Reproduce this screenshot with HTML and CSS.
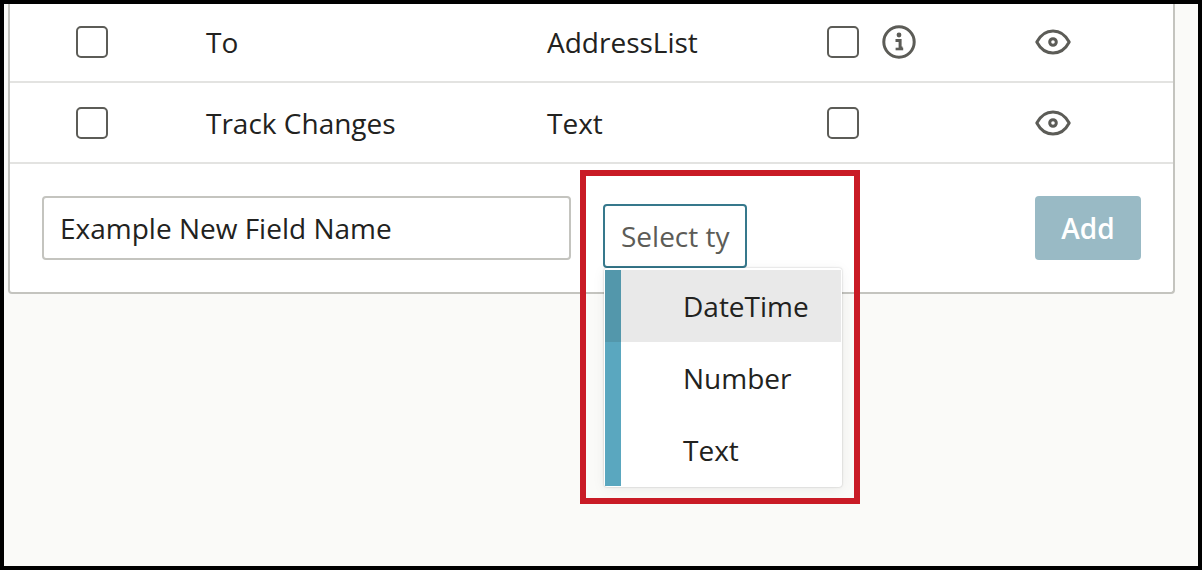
FILE: index.html
```html
<!DOCTYPE html>
<html lang="en">
<head>
<meta charset="utf-8">
<title>Fields</title>
<link rel="stylesheet" href="styles.css">
</head>
<body>
<div class="frame">
  <div class="card">
    <div class="row">
      <span class="check"></span>
      <span class="cell">To</span>
      <span class="cell">AddressList</span>
      <span class="check"></span>
      <svg class="info" viewBox="0 0 34 34"><circle cx="17" cy="17" r="15.200" fill="none" stroke="#5c5c57" stroke-width="3"/><circle cx="17" cy="10" r="2.400" fill="#5c5c57"/><path d="M13.500 15.500h4.600v7.500h2.400" fill="none" stroke="#5c5c57" stroke-width="3"/><path d="M13.600 24h7.600" fill="none" stroke="#5c5c57" stroke-width="2.600"/></svg>
      <svg class="eye" viewBox="0 0 36 26"><path d="M1.800 13C5.500 6 11 2 18 2s12.500 4 16.200 11C30.500 20 25 24 18 24S5.500 20 1.800 13Z" fill="none" stroke="#5c5c57" stroke-width="3" stroke-linejoin="round"/><circle cx="18" cy="13" r="3.300" fill="none" stroke="#5c5c57" stroke-width="3"/></svg>
    </div>
    <div class="row">
      <span class="check"></span>
      <span class="cell">Track Changes</span>
      <span class="cell">Text</span>
      <span class="check"></span>
      <span></span>
      <svg class="eye" viewBox="0 0 36 26"><path d="M1.800 13C5.500 6 11 2 18 2s12.500 4 16.200 11C30.500 20 25 24 18 24S5.500 20 1.800 13Z" fill="none" stroke="#5c5c57" stroke-width="3" stroke-linejoin="round"/><circle cx="18" cy="13" r="3.300" fill="none" stroke="#5c5c57" stroke-width="3"/></svg>
    </div>
    <div class="add-row">
      <div class="name-input">Example New Field Name</div>
      <div class="select-wrap">
        <div class="select">Select ty</div>
        <ul class="menu">
          <li class="option active">DateTime</li>
          <li class="option">Number</li>
          <li class="option">Text</li>
        </ul>
      </div>
      <button class="add-btn">Add</button>
    </div>
  </div>
  <div class="highlight"></div>
</div>
</body>
</html>
```
FILE: styles.css
```css
* { box-sizing: border-box; }
html, body { margin: 0; padding: 0; }
body { font-family: "Open Sans", sans-serif; color: #222220; }
.frame {
  position: relative;
  width: 1202px;
  height: 570px;
  border: 4px solid #000;
  background: #fafaf8;
  overflow: hidden;
}
.card {
  width: 1167px;
  margin: -2px 0 0 4px;
  background: #fff;
  border: 2px solid #c4c4bf;
  border-top: 0;
  border-radius: 0 0 4px 4px;
}
.row {
  display: grid;
  grid-template-columns: 130px 341px 280px 55px 153px 36px;
  align-items: center;
  height: 81px;
  padding: 0 0 0 66px;
  border-bottom: 2px solid #e3e3e1;
  font-size: 28px;
}
.cell { line-height: 36px; }
.check {
  width: 32px;
  height: 32px;
  border: 2px solid #5c5c57;
  border-radius: 5px;
  background: #fff;
}
.info { width: 34px; height: 34px; display: block; }
.eye { width: 36px; height: 26px; display: block; }
.add-row {
  display: flex;
  align-items: flex-start;
  padding: 32px 32px 24px 32px;
}
.name-input {
  width: 529px;
  height: 64px;
  padding: 0 16px;
  border: 2px solid #c4c4bf;
  border-radius: 4px;
  font-size: 28px;
  line-height: 60px;
  background: #fff;
}
.select-wrap {
  position: relative;
  margin: 8px 0 0 32px;
  width: 144px;
}
.select {
  width: 144px;
  height: 64px;
  padding: 0 16px;
  border: 2px solid #36788c;
  border-radius: 4px;
  font-size: 28px;
  line-height: 60px;
  color: #5c5c57;
  background: #fff;
  white-space: nowrap;
}
.menu {
  position: absolute;
  top: 64px;
  left: 1px;
  width: 238px;
  height: 219px;
  margin: 0;
  padding: 2px 1px 0 1px;
  list-style: none;
  background: #fff;
  border-radius: 3px;
  box-shadow: 0 0 2px rgba(0, 0, 0, 0.25), 0 2px 14px rgba(0, 0, 0, 0.06);
}
.option {
  height: 72px;
  padding-left: 62px;
  border-left: 16px solid #5aa7bf;
  font-size: 28px;
  line-height: 72px;
}
.option.active { background: #e9e9e9; border-left-color: #5397ab; }
.add-btn {
  margin-left: auto;
  width: 106px;
  height: 64px;
  border: 0;
  border-radius: 4px;
  background: #99bac5;
  color: #fff;
  font-family: "Open Sans", sans-serif;
  font-size: 28px;
  font-weight: 600;
  padding: 0;
}
.highlight {
  position: absolute;
  left: 576px;
  top: 166px;
  width: 280px;
  height: 334px;
  border: 6px solid #c91b26;
  pointer-events: none;
}
```
